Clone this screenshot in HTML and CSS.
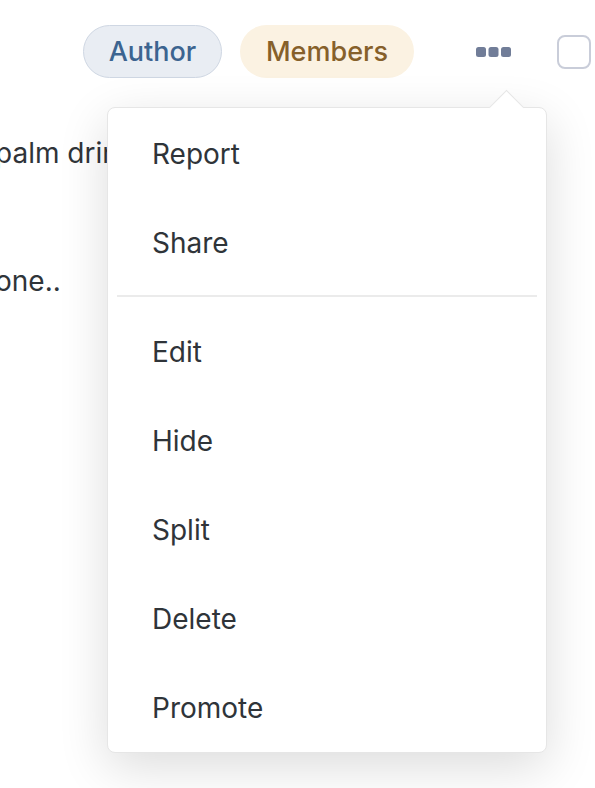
FILE: index.html
```html
<!DOCTYPE html>
<html lang="en">
<head>
    <meta charset="UTF-8">
    <meta name="viewport" content="width=device-width, initial-scale=1.0">
    <title>Post menu</title>
    <link rel="stylesheet" href="styles.css">
</head>
<body>
    <div class="post">
        <div class="post-header">
            <span class="badge badge-author">Author</span>
            <span class="badge badge-members">Members</span>
            <button class="more-btn" aria-label="More">
                <svg width="36" height="12" viewBox="0 0 36 12">
                    <rect x="0" y="1" width="10" height="10" rx="2.5" fill="#717d98"/>
                    <rect x="12.5" y="1" width="10" height="10" rx="2.5" fill="#717d98"/>
                    <rect x="25" y="1" width="10" height="10" rx="2.5" fill="#717d98"/>
                </svg>
            </button>
            <span class="select-box"></span>
        </div>
        <div class="post-body">
            <p>palm drink</p>
            <p>&nbsp;</p>
            <p>one..</p>
        </div>

        <div class="menu">
            <div class="menu-item">Report</div>
            <div class="menu-item">Share</div>
            <div class="menu-divider"></div>
            <div class="menu-item">Edit</div>
            <div class="menu-item">Hide</div>
            <div class="menu-item">Split</div>
            <div class="menu-item">Delete</div>
            <div class="menu-item">Promote</div>
        </div>
    </div>
</body>
</html>
```

FILE: styles.css
```css
body {
    font-family: Inter, "Noto Sans", sans-serif;
    background-color: #ffffff;
    margin: 0;
    color: #2f3439;
    overflow: hidden;
}
.post {
    position: relative;
    height: 788px;
}
.post-header {
    display: flex;
    align-items: center;
    height: 53px;
    padding-top: 25px;
    padding-left: 83px;
}
.badge {
    display: inline-flex;
    align-items: center;
    justify-content: center;
    height: 53px;
    box-sizing: border-box;
    border-radius: 27px;
    font-size: 27px;
    font-weight: 500;
}
.badge-author {
    background-color: #e9edf3;
    border: 1px solid #cfd7e3;
    color: #3c6490;
    width: 139px;
}
.badge-members {
    background-color: #fbf2e2;
    color: #86602a;
    margin-left: 18px;
    width: 174px;
}
.more-btn {
    border: none;
    background: none;
    padding: 0;
    margin-left: 62px;
    width: 36px;
    height: 12px;
    display: flex;
    cursor: pointer;
}
.select-box {
    width: 34px;
    height: 34px;
    box-sizing: border-box;
    border: 2px solid #c9cdd9;
    border-radius: 8px;
    margin-left: 45px;
    flex-shrink: 0;
}
.post-body {
    margin-left: -5px;
    padding-top: 43px;
    font-size: 28px;
}
.post-body p {
    margin: 0;
    line-height: 64px;
}
.menu {
    position: absolute;
    left: 107px;
    top: 107px;
    width: 440px;
    box-sizing: border-box;
    background: white;
    border: 1px solid #e6e6e6;
    border-radius: 8px;
    padding-top: 1px;
    box-shadow: 0px 14px 50px rgba(0, 0, 0, 0.14);
}
.menu::before {
    content: "";
    position: absolute;
    right: 27px;
    top: -13px;
    width: 24px;
    height: 24px;
    background: white;
    border-left: 1px solid #e6e6e6;
    border-top: 1px solid #e6e6e6;
    transform: rotate(45deg);
}
.menu-item {
    height: 89px;
    display: flex;
    align-items: center;
    padding-left: 44px;
    font-size: 28px;
    position: relative;
}
.menu-divider {
    height: 2px;
    background-color: #ebebeb;
    margin: 8px 9px 10px 9px;
}
```
